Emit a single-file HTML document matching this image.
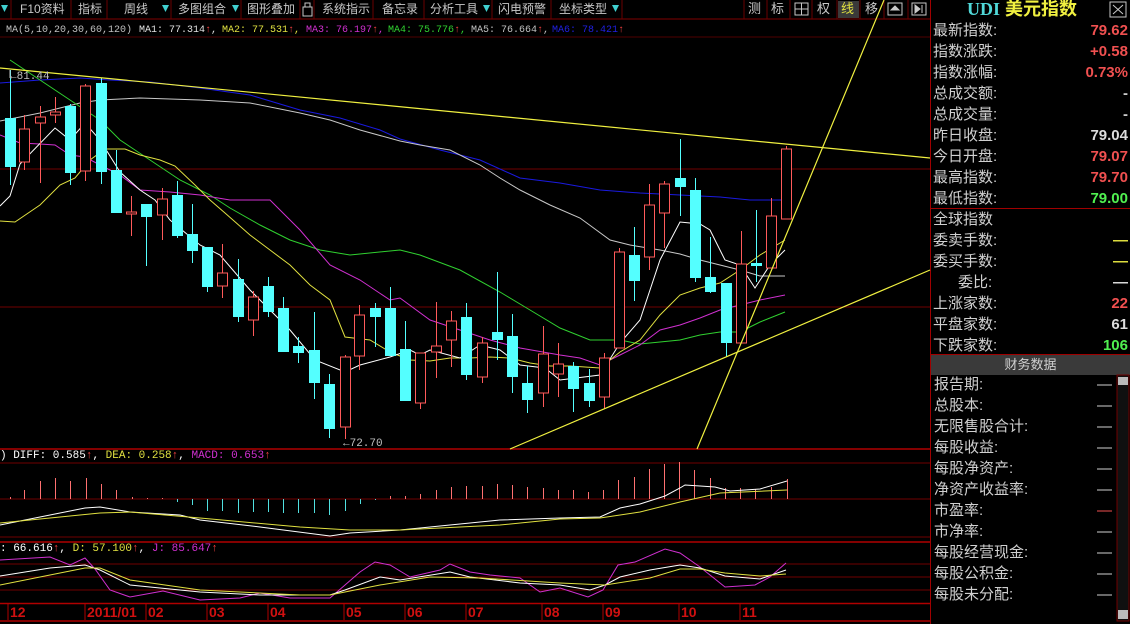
<!DOCTYPE html>
<html><head><meta charset="utf-8"><style>
body{margin:0;background:#000;width:1130px;height:624px;overflow:hidden;position:relative;font-family:"Liberation Sans","Noto Sans CJK SC",sans-serif}
.tb{position:absolute;top:0;height:19px;color:#c8c8c8;font-size:12px;line-height:19px;white-space:nowrap}
.tr{position:absolute;top:0;height:18px;color:#c8c8c8;font-size:13px;line-height:18px}
.ma{position:absolute;top:24px;font-family:"Liberation Mono",monospace;font-size:10px;line-height:13px;white-space:pre}
.mb{position:absolute;font-family:"Liberation Mono",monospace;font-size:11px;line-height:14px;white-space:pre}
.r{position:absolute;left:933px;width:195px;font-size:15px;line-height:21px;color:#d0d0d0;height:21px}
.r b{position:absolute;right:0;top:0;font-weight:bold;font-family:"Liberation Sans",sans-serif}
.f{position:absolute;left:934px;width:180px;font-size:15px;line-height:21px;color:#d0d0d0;height:21px}
.f i{position:absolute;right:2px;top:0;font-style:normal}
</style></head><body>
<svg width="1130" height="624" style="position:absolute;left:0;top:0">
<g stroke="#6a0000" stroke-width="1">
<line x1="0" y1="19" x2="930" y2="19" stroke="#800000"/>
<line x1="11" y1="0" x2="11" y2="19"/><line x1="71" y1="0" x2="71" y2="19"/><line x1="107" y1="0" x2="107" y2="19"/><line x1="171" y1="0" x2="171" y2="19"/><line x1="241" y1="0" x2="241" y2="19"/><line x1="300" y1="0" x2="300" y2="19"/><line x1="314" y1="0" x2="314" y2="19"/><line x1="373" y1="0" x2="373" y2="19"/><line x1="424" y1="0" x2="424" y2="19"/><line x1="492" y1="0" x2="492" y2="19"/><line x1="551" y1="0" x2="551" y2="19"/><line x1="622" y1="0" x2="622" y2="19"/>
<line x1="744" y1="0" x2="744" y2="19"/><line x1="767" y1="0" x2="767" y2="19"/><line x1="790" y1="0" x2="790" y2="19"/><line x1="812" y1="0" x2="812" y2="19"/><line x1="837" y1="0" x2="837" y2="19"/><line x1="860" y1="0" x2="860" y2="19"/><line x1="884" y1="0" x2="884" y2="19"/><line x1="908" y1="0" x2="908" y2="19"/>
</g>
<rect x="838" y="1" width="21" height="17" fill="#3a3a3a"/>
<g fill="#3fd0d0"><polygon points="1,5 8,5 4.5,12"/><polygon points="162,5 169,5 165.5,12"/><polygon points="232,5 239,5 235.5,12"/><polygon points="483,5 490,5 486.5,12"/><polygon points="612,5 619,5 615.5,12"/></g>
<rect x="303" y="7" width="9" height="9" fill="none" stroke="#c8c8c8"/><path d="M305 7 V3 h5 v4" fill="none" stroke="#c8c8c8"/>
<g fill="none" stroke="#c8c8c8"><rect x="795" y="3" width="13" height="12"/><line x1="801.5" y1="3" x2="801.5" y2="15"/><line x1="795" y1="9" x2="808" y2="9"/>
<rect x="888" y="3" width="14" height="12"/><polygon points="891,10 895,6 899,10" fill="#c8c8c8"/>
<rect x="912" y="3" width="14" height="12"/><polygon points="915,5 920,9 915,13" fill="#c8c8c8"/><line x1="922" y1="5" x2="922" y2="13"/></g>
<line x1="930.5" y1="0" x2="930.5" y2="624" stroke="#a00000"/>
<line x1="0" y1="37" x2="930" y2="37" stroke="#500000"/>
<g stroke="#700000"><line x1="0" y1="169" x2="930" y2="169"/><line x1="0" y1="307" x2="930" y2="307"/>
<line x1="0" y1="463" x2="930" y2="463"/><line x1="0" y1="499" x2="930" y2="499"/><line x1="0" y1="537" x2="930" y2="537"/>
<line x1="0" y1="564" x2="930" y2="564"/><line x1="0" y1="577" x2="930" y2="577"/><line x1="0" y1="590" x2="930" y2="590"/></g>
<g stroke="#b00000" stroke-width="1.5"><line x1="0" y1="449" x2="930" y2="449"/><line x1="0" y1="542" x2="930" y2="542"/><line x1="0" y1="603.5" x2="930" y2="603.5"/><line x1="0" y1="621" x2="930" y2="621"/></g>
<g stroke="#b00000"><line x1="8" y1="604" x2="8" y2="620"/><line x1="85" y1="604" x2="85" y2="620"/><line x1="146" y1="604" x2="146" y2="620"/><line x1="207" y1="604" x2="207" y2="620"/><line x1="268" y1="604" x2="268" y2="620"/><line x1="344" y1="604" x2="344" y2="620"/><line x1="405" y1="604" x2="405" y2="620"/><line x1="466" y1="604" x2="466" y2="620"/><line x1="542" y1="604" x2="542" y2="620"/><line x1="603" y1="604" x2="603" y2="620"/><line x1="679" y1="604" x2="679" y2="620"/><line x1="740" y1="604" x2="740" y2="620"/></g>
<g fill="#d01010" font-family="Liberation Sans" font-weight="bold" font-size="14">
<text x="10" y="617">12</text><text x="87" y="617">2011/01</text><text x="148" y="617">02</text><text x="209" y="617">03</text><text x="270" y="617">04</text><text x="346" y="617">05</text><text x="407" y="617">06</text><text x="468" y="617">07</text><text x="544" y="617">08</text><text x="605" y="617">09</text><text x="681" y="617">10</text><text x="742" y="617">11</text></g>
<g fill="none" stroke-width="1">
<polyline stroke="#1a1ae0" points="0,83 40,80 80,78 110,80 150,82 200,88 250,95 300,110 340,118 380,130 400,139 440,150 480,160 520,178 560,183 600,190 640,193 680,195 720,197 750,200 785,200"/>
<polyline stroke="#c8c8c8" points="0,121 20,117 40,113 60,108 80,103 100,100 140,98 200,100 250,103 300,113 330,120 360,130 400,141 420,145 450,150 480,165 500,178 520,190 550,205 580,218 610,240 630,245 660,250 680,254 700,260 720,265 740,270 760,276 785,276"/>
<polyline stroke="#30d030" points="10,60 40,80 70,100 100,120 120,140 150,160 180,180 210,195 230,208 260,225 290,240 320,250 350,255 400,250 420,255 460,270 500,292 530,310 560,328 590,340 620,340 640,344 660,342 680,340 700,335 720,332 740,332 760,322 785,312"/>
<polyline stroke="#d030d0" points="0,135 20,143 40,144 55,145 70,155 85,157 100,165 120,175 140,190 170,192 200,195 230,200 270,200 300,230 330,265 360,280 390,300 400,298 430,320 460,330 490,340 520,348 560,355 580,358 600,365 620,355 640,345 660,330 680,325 700,318 720,310 740,305 760,300 785,295"/>
<polyline stroke="#e0e040" points="0,221 15,222 40,205 60,185 75,178 90,160 105,149 125,149 140,155 160,160 175,166 195,185 210,200 225,213 250,235 270,250 290,265 310,285 330,300 345,337 370,340 390,352 410,360 430,361 450,358 470,358 490,357 510,358 530,363 550,366 570,366 600,368 620,352 640,340 660,315 680,295 700,288 720,283 740,270 760,255 785,240"/>
<polyline stroke="#ffffff" points="0,206 10,196 20,164 55,128 70,140 85,123 100,140 120,172 140,190 155,200 170,220 200,245 220,255 250,290 290,330 315,360 345,372 360,365 390,357 410,350 420,355 430,350 460,358 480,345 500,350 520,365 545,368 560,380 600,375 620,343 640,320 660,260 680,222 700,224 710,230 725,260 740,265 755,288 770,265 785,250"/>
</g>
<g id="c" stroke-width="1"></g>
<g stroke="#f0f040" stroke-width="1.2"><line x1="0" y1="68" x2="930" y2="158"/><line x1="510" y1="449" x2="930" y2="270"/><line x1="697" y1="449" x2="884" y2="0"/></g>
<g fill="#c0c0c0" font-family="Liberation Mono" font-size="11"><text x="10" y="79">←81.44</text><text x="343" y="446">←72.70</text></g>
<line x1="10" y1="70" x2="10" y2="78" stroke="#c0c0c0"/>
<g id="m" stroke-width="1"></g>
<g fill="none">
<polyline stroke="#ffffff" points="0,525 50,515 85,508 100,507 130,512 180,515 200,520 260,527 330,536 350,533 400,530 500,520 560,518 600,517 620,508 640,504 665,496 680,488 685,485 700,486 715,487 730,491 760,489 787,481"/>
<polyline stroke="#e0e040" points="0,523 100,513 130,512 200,518 300,527 350,530 400,530 500,525 560,519 600,518 640,512 680,502 720,493 787,490"/>
<polyline stroke="#d030d0" points="0,560 50,557 70,565 85,558 95,569 110,590 130,597 163,591 200,600 240,598 260,593 290,598 330,598 360,572 375,562 390,565 410,577 440,570 450,564 470,572 490,575 520,578 540,592 560,588 588,597 603,590 618,565 635,562 665,549 680,553 700,567 725,587 755,585 770,577 786,563"/>
<polyline stroke="#ffffff" points="0,576 50,568 85,565 100,570 130,585 200,592 260,595 330,595 345,590 380,577 400,580 450,572 470,577 520,583 560,585 590,590 605,585 620,577 650,570 680,565 700,568 725,576 760,579 786,570"/>
<polyline stroke="#e0e040" points="0,585 50,575 85,568 100,568 130,580 200,590 300,595 330,595 380,585 430,577 480,578 560,583 605,585 650,578 680,569 700,569 725,573 760,576 786,574"/>
</g>
<line x1="930" y1="208.5" x2="1130" y2="208.5" stroke="#a00000"/>
<line x1="930" y1="354.5" x2="1130" y2="354.5" stroke="#a00000"/>
<rect x="931" y="355" width="199" height="20" fill="#3a3a3a"/>
<rect x="1117" y="375" width="12" height="246" fill="#101010" stroke="#700000"/>
<rect x="1118" y="377" width="10" height="8" fill="#bbb"/><rect x="1118" y="610" width="10" height="9" fill="#bbb"/>
<rect x="1110" y="2" width="16" height="15" fill="none" stroke="#c8c8c8"/><path d="M1113 5 L1123 14 M1123 5 L1113 14" stroke="#c8c8c8"/>
</svg>
<script>
var C=[[10,70,118,167,185,0],[24,115,129,162,170,1],[40,106,117,123,183,1],[55,97,112,115,123,1],[70,104,106,173,185,0],[85,84,86,171,181,1],[101,78,83,172,184,0],[116,150,170,213,213,0],[131,196,212,214,236,1],[146,204,204,217,266,0],[162,188,199,215,240,1],[177,181,195,236,238,0],[192,204,234,251,263,0],[207,247,247,287,292,0],[222,244,273,286,298,1],[238,259,279,317,322,0],[253,291,297,320,336,1],[268,277,286,312,317,0],[283,297,308,352,352,0],[298,337,346,353,363,0],[314,312,350,383,399,0],[329,374,384,429,438,0],[345,355,357,427,439,1],[359,305,315,356,370,1],[375,303,308,317,347,0],[390,287,308,356,356,0],[405,321,349,401,401,0],[420,353,353,403,409,1],[436,302,346,352,378,1],[451,311,321,340,367,1],[466,303,317,375,380,0],[482,337,343,377,383,1],[497,272,332,340,360,0],[512,314,336,377,393,0],[527,366,383,400,413,0],[543,326,354,393,407,1],[558,343,364,374,397,1],[573,362,366,389,412,0],[589,369,383,401,407,0],[604,353,358,397,409,1],[619,248,252,348,348,1],[634,227,255,281,301,0],[649,184,205,257,270,1],[664,181,184,213,248,1],[680,139,178,187,216,0],[695,178,190,278,282,0],[710,237,277,292,293,0],[726,283,283,343,357,0],[741,231,264,343,343,1],[756,210,263,266,282,0],[771,198,216,268,268,1],[786,146,149,219,219,1]];
var s='';C.forEach(function(c){var x=c[0],col=c[5]?'#ff5a5a':'#54ffff';
s+='<line x1="'+(x+.5)+'" y1="'+c[1]+'" x2="'+(x+.5)+'" y2="'+c[4]+'" stroke="'+col+'"/>';
var h=Math.max(c[3]-c[2],2);
if(c[5])s+='<rect x="'+(x-4.5)+'" y="'+c[2]+'" width="10" height="'+h+'" fill="#000" stroke="'+col+'"/>';
else s+='<rect x="'+(x-5)+'" y="'+c[2]+'" width="11" height="'+h+'" fill="'+col+'"/>';});
document.getElementById('c').innerHTML=s;
var M=[[10,497],[24,490],[40,481],[55,478],[70,481],[86,478],[101,484],[116,490],[132,497],[147,498],[162,498],[177,502],[192,505],[207,511],[222,511],[238,513],[253,512],[268,512],[283,513],[298,513],[314,513],[329,515],[345,511],[360,504],[375,500],[390,496],[405,496],[420,494],[436,490],[451,487],[466,486],[482,486],[497,484],[512,485],[527,487],[543,488],[558,490],[573,490],[588,492],[603,490],[618,480],[634,477],[649,469],[664,464],[679,462],[694,470],[710,478],[725,488],[740,488],[755,489],[771,487],[787,479]];
s='';M.forEach(function(m){var col=m[1]<499?'#ff7070':'#50e0e0';s+='<line x1="'+(m[0]+.5)+'" y1="499" x2="'+(m[0]+.5)+'" y2="'+m[1]+'" stroke="'+col+'"/>';});
document.getElementById('m').innerHTML=s;
</script>
<div class="tb" style="left:20px">F10资料</div><div class="tb" style="left:78px">指标</div><div class="tb" style="left:124px">周线</div>
<div class="tb" style="left:178px">多图组合</div><div class="tb" style="left:247px">图形叠加</div><div class="tb" style="left:322px">系统指示</div>
<div class="tb" style="left:382px">备忘录</div><div class="tb" style="left:430px">分析工具</div><div class="tb" style="left:498px">闪电预警</div><div class="tb" style="left:559px">坐标类型</div>
<div class="tr" style="left:748px">测</div><div class="tr" style="left:771px">标</div><div class="tr" style="left:817px">权</div><div class="tr" style="left:841px;color:#e0e040">线</div><div class="tr" style="left:865px">移</div>
<div class="ma" style="left:6px;color:#c0c0c0">MA(5,10,20,30,60,120)</div>
<div class="ma" style="left:139px;color:#e0e0e0">MA1: 77.314<span style="color:#f04040">↑</span>,</div>
<div class="ma" style="left:222px;color:#e0e040">MA2: 77.531<span style="color:#f04040">↑</span>,</div>
<div class="ma" style="left:306px;color:#d030d0">MA3: 76.197<span style="color:#f04040">↑</span>,</div>
<div class="ma" style="left:388px;color:#30d030">MA4: 75.776<span style="color:#f04040">↑</span>,</div>
<div class="ma" style="left:471px;color:#c0c0c0">MA5: 76.664<span style="color:#f04040">↑</span>,</div>
<div class="ma" style="left:552px;color:#2020e0">MA6: 78.421<span style="color:#f04040">↑</span></div>
<div class="mb" style="top:449px;left:0;color:#fff">) DIFF: 0.585<span style="color:#f04040">↑</span>, <span style="color:#e0e040">DEA: 0.258</span><span style="color:#f04040">↑</span>, <span style="color:#d030d0">MACD: 0.653</span><span style="color:#f04040">↑</span></div>
<div class="mb" style="top:542px;left:0;color:#fff">: 66.616<span style="color:#f04040">↑</span>, <span style="color:#e0e040">D: 57.100</span><span style="color:#f04040">↑</span>, <span style="color:#d030d0">J: 85.647</span><span style="color:#f04040">↑</span></div>
<div style="position:absolute;left:967px;top:-2px;font-size:18px;font-weight:bold;line-height:22px"><span style="color:#50d8d8;font-family:'Liberation Serif',serif">UDI</span> <span style="color:#f0f040">美元指数</span></div>
<div class="r" style="top:20px">最新指数:<b style="color:#f05050">79.62</b></div>
<div class="r" style="top:41px">指数涨跌:<b style="color:#f05050">+0.58</b></div>
<div class="r" style="top:62px">指数涨幅:<b style="color:#f05050">0.73%</b></div>
<div class="r" style="top:83px">总成交额:<b style="color:#ccc">-</b></div>
<div class="r" style="top:104px">总成交量:<b style="color:#ccc">-</b></div>
<div class="r" style="top:125px">昨日收盘:<b style="color:#ddd">79.04</b></div>
<div class="r" style="top:146px">今日开盘:<b style="color:#f05050">79.07</b></div>
<div class="r" style="top:167px">最高指数:<b style="color:#f05050">79.70</b></div>
<div class="r" style="top:188px">最低指数:<b style="color:#50f050">79.00</b></div>
<div class="r" style="top:209px">全球指数</div>
<div class="r" style="top:230px">委卖手数:<b style="color:#e0e040">—</b></div>
<div class="r" style="top:251px">委买手数:<b style="color:#e0e040">—</b></div>
<div class="r" style="top:272px">&nbsp;&nbsp;&nbsp;&nbsp;&nbsp;&nbsp;委比:<b style="color:#ddd">—</b></div>
<div class="r" style="top:293px">上涨家数:<b style="color:#f05050">22</b></div>
<div class="r" style="top:314px">平盘家数:<b style="color:#ddd">61</b></div>
<div class="r" style="top:335px">下跌家数:<b style="color:#50f050">106</b></div>
<div style="position:absolute;left:931px;width:199px;top:355px;text-align:center;font-size:13px;line-height:20px;color:#d0d0d0">财务数据</div>
<div class="f" style="top:374px">报告期:<i>—</i></div><div class="f" style="top:395px">总股本:<i>—</i></div>
<div class="f" style="top:416px">无限售股合计:<i>—</i></div><div class="f" style="top:437px">每股收益:<i>—</i></div>
<div class="f" style="top:458px">每股净资产:<i>—</i></div><div class="f" style="top:479px">净资产收益率:<i>—</i></div>
<div class="f" style="top:500px">市盈率:<i style="color:#f05050">—</i></div><div class="f" style="top:521px">市净率:<i>—</i></div>
<div class="f" style="top:542px">每股经营现金:<i>—</i></div><div class="f" style="top:563px">每股公积金:<i>—</i></div>
<div class="f" style="top:584px">每股未分配:<i>—</i></div>
</body></html>
